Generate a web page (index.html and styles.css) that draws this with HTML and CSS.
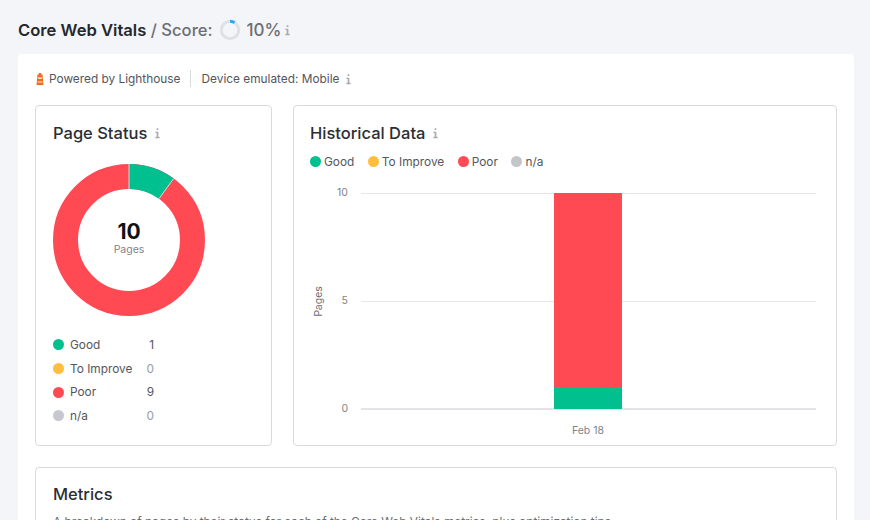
FILE: index.html
```html
<!DOCTYPE html>
<html lang="en">
<head>
<meta charset="utf-8">
<title>Core Web Vitals</title>
<link rel="stylesheet" href="styles.css">
</head>
<body>
<header class="page-head">
  <h1 class="title"><span class="title-strong">Core Web Vitals</span> / Score:</h1>
  <svg class="score-ring" viewBox="0 0 22 22" aria-hidden="true">
    <circle cx="11" cy="11" r="8.7" fill="none" stroke="#dfe1e6" stroke-width="3"/>
    <path d="M11 2.3A8.7 8.7 0 0 1 15.6 3.6" fill="none" stroke="#2baaf0" stroke-width="3"/>
  </svg>
  <span class="score-value">10%</span>
  <svg class="info info-head" viewBox="0 0 8 14" aria-hidden="true"><path d="M3 1.500h2v2H3zM1.500 5.500H5v6h1.500v1.500h-5v-1.500H3v-4.500H1.500z"/></svg>
</header>
<main class="sheet">
  <div class="meta">
    <svg class="lighthouse" viewBox="0 0 8 12" aria-hidden="true">
      <path d="M2.800 0h2.400v1.500h1.300L7.500 12H.5L1.500 1.500h1.300z" fill="#f0682c"/>
      <path d="M1.900 4.300h4.200v1.700H1.900z" fill="#ffd9a8"/>
      <path d="M1.500 8.300h5v1.400h-5z" fill="#ffc27a"/>
    </svg>
    <span>Powered by Lighthouse</span>
    <span class="meta-sep"></span>
    <span>Device emulated: Mobile</span>
    <svg class="info info-meta" viewBox="0 0 8 14" aria-hidden="true"><path d="M3 1.500h2v2H3zM1.500 5.500H5v6h1.500v1.500h-5v-1.500H3v-4.500H1.500z"/></svg>
  </div>
  <div class="panels">
    <section class="panel status">
      <h2 class="panel-title">Page Status <svg class="info info-title" viewBox="0 0 8 14" aria-hidden="true"><path d="M3 1.500h2v2H3zM1.500 5.500H5v6h1.500v1.500h-5v-1.500H3v-4.500H1.500z"/></svg></h2>
      <div class="donut">
        <svg class="donut-svg" viewBox="0 0 152 152" aria-hidden="true">
          <circle cx="76" cy="76" r="63.500" fill="none" stroke="#ff4953" stroke-width="25"/>
          <path d="M76 12.500A63.500 63.500 0 0 1 113.300 24.600" fill="none" stroke="#00c08f" stroke-width="25"/>
          <path d="M76 0V25M120.700 14.500L105.900 34.800" stroke="#d9dade" stroke-width="1" fill="none"/>
        </svg>
        <div class="donut-label">
          <div class="donut-num">10</div>
          <div class="donut-sub">Pages</div>
        </div>
      </div>
      <ul class="status-list">
        <li class="status-row"><i class="dot good"></i><span class="status-name">Good</span><span class="status-val dark">1</span></li>
        <li class="status-row"><i class="dot warn"></i><span class="status-name">To Improve</span><span class="status-val">0</span></li>
        <li class="status-row"><i class="dot poor"></i><span class="status-name">Poor</span><span class="status-val dark">9</span></li>
        <li class="status-row"><i class="dot na"></i><span class="status-name">n/a</span><span class="status-val">0</span></li>
      </ul>
    </section>
    <section class="panel history">
      <h2 class="panel-title">Historical Data <svg class="info info-title" viewBox="0 0 8 14" aria-hidden="true"><path d="M3 1.500h2v2H3zM1.500 5.500H5v6h1.500v1.500h-5v-1.500H3v-4.500H1.500z"/></svg></h2>
      <div class="legend">
        <span class="legend-item"><i class="dot good"></i>Good</span>
        <span class="legend-item"><i class="dot warn"></i>To Improve</span>
        <span class="legend-item"><i class="dot poor"></i>Poor</span>
        <span class="legend-item"><i class="dot na-2"></i>n/a</span>
      </div>
      <div class="chart">
        <div class="y-title"><span>Pages</span></div>
        <div class="y-ticks"><span>10</span><span>5</span><span>0</span></div>
        <div class="plot">
          <div class="gridline"></div>
          <div class="gridline"></div>
          <div class="gridline base"></div>
          <div class="bar">
            <div class="bar-poor"></div>
            <div class="bar-good"></div>
          </div>
          <div class="x-label">Feb 18</div>
        </div>
      </div>
    </section>
  </div>
  <section class="panel metrics">
    <h2 class="panel-title">Metrics</h2>
    <p class="metrics-text">A breakdown of pages by their status for each of the Core Web Vitals metrics, plus optimization tips.</p>
  </section>
</main>
</body>
</html>
```
FILE: styles.css
```css
* { box-sizing: border-box; }
html, body { margin: 0; height: 520px; overflow: hidden; }
body {
  background: #f4f5f9;
  font-family: Inter, "Liberation Sans", sans-serif;
  color: #2b2e33;
  padding: 0 16px 0 18px;
}
.page-head {
  height: 54px;
  padding-top: 19px;
  display: flex;
  align-items: flex-start;
}
.title {
  margin: 0;
  font-size: 16.600px;
  line-height: 22px;
  font-weight: 500;
  color: #6c6e74;
}
.title-strong { font-weight: 600; color: #25282c; }
.score-ring { width: 22px; height: 22px; margin: 0 6px 0 6px; }
.score-value { font-size: 17px; line-height: 22px; font-weight: 500; color: #6c6e74; }
.info { fill: #a9abb0; flex: none; }
.info-head { width: 7px; height: 12px; margin: 5px 0 0 3px; }
.sheet {
  background: #fff;
  border-radius: 4px 4px 0 0;
  padding: 15px 17px 0;
  height: 466px;
  overflow: hidden;
}
.meta {
  height: 19px;
  display: flex;
  align-items: center;
  font-size: 11.850px;
  color: #54565c;
}
.lighthouse { width: 8px; height: 12px; margin: 0 5px 0 1px; }
.meta-sep { width: 1px; height: 17px; background: #d9dade; margin: 0 11px 0 9px; }
.info-meta { width: 7px; height: 12px; margin-left: 6px; }
.panels {
  margin-top: 17px;
  display: flex;
  gap: 21px;
}
.panel {
  background: #fff;
  border: 1px solid #d9dade;
  border-radius: 4px;
}
.status { flex: none; width: 237px; height: 341px; padding: 17px 17px 0; }
.history { flex: 1; height: 341px; padding: 17px 20px 0 16px; }
.panel-title {
  margin: 0;
  font-size: 16.500px;
  line-height: 20px;
  font-weight: 500;
  color: #2b2e33;
  display: flex;
  align-items: center;
}
.info-title { width: 7px; height: 12px; margin-left: 7px; }
.donut {
  position: relative;
  width: 152px;
  height: 152px;
  margin-top: 21px;
}
.donut-svg { display: block; width: 152px; height: 152px; }
.donut-label {
  position: absolute;
  inset: 0;
  display: flex;
  flex-direction: column;
  align-items: center;
  justify-content: center;
}
.donut-num { font-size: 21px; line-height: 20px; font-weight: 700; color: #101215; margin: -2px 0 2px; }
.donut-sub { font-size: 10.500px; line-height: 12px; color: #818389; }
.status-list {
  list-style: none;
  margin: 17px 0 0;
  padding: 0;
}
.status-row {
  height: 23.700px;
  display: flex;
  align-items: center;
  font-size: 11.850px;
  color: #54565c;
}
.dot {
  display: block;
  width: 11px;
  height: 11px;
  border-radius: 50%;
  flex: none;
}
.good { background: #00c08f; }
.warn { background: #ffbe3d; }
.poor { background: #ff4953; }
.na { background: #c6c7cf; }
.na-2 { background: #c4c5c9; }
.status-name { margin-left: 6px; width: 76px; }
.status-val { width: 8px; text-align: right; color: #9a9ca2; }
.status-val.dark { color: #54565c; }
.legend {
  margin-top: 10px;
  height: 17px;
  display: flex;
  align-items: center;
  gap: 13.500px;
  font-size: 11.850px;
  color: #54565c;
}
.legend-item { display: flex; align-items: center; gap: 3px; }
.chart {
  margin-top: 23px;
  display: flex;
  height: 216px;
}
.y-title {
  width: 16px;
  display: flex;
  align-items: center;
  justify-content: center;
  font-size: 10.500px;
  color: #6c6e74;
}
.y-title span { transform: rotate(-90deg); white-space: nowrap; }
.y-ticks {
  width: 18px;
  margin-left: 4px;
  height: 232px;
  margin-top: -8px;
  display: flex;
  flex-direction: column;
  justify-content: space-between;
  align-items: flex-end;
  font-size: 10.500px;
  line-height: 16px;
  color: #818389;
}
.y-ticks span { height: 16px; }
.plot {
  position: relative;
  margin-left: 13px;
  width: 455px;
  height: 217px;
  display: flex;
  flex-direction: column;
  justify-content: space-between;
}
.gridline { height: 1px; background: #e6e7ea; }
.gridline.base { height: 2px; background: #e3e4e7; }
.bar {
  position: absolute;
  left: 193px;
  top: 0;
  width: 68px;
  height: 216px;
  display: flex;
  flex-direction: column;
}
.bar-poor { height: 194px; background: #ff4953; }
.bar-good { flex: 1; background: #00c08f; }
.x-label {
  position: absolute;
  left: 193px;
  top: 231px;
  width: 68px;
  text-align: center;
  font-size: 10.500px;
  line-height: 14px;
  color: #818389;
}
.metrics {
  margin-top: 21px;
  height: 80px;
  padding: 16px 17px 0;
}
.metrics-text {
  margin: 10px 0 0;
  font-size: 11.850px;
  line-height: 16px;
  color: #6c6e74;
  white-space: nowrap;
}
```
